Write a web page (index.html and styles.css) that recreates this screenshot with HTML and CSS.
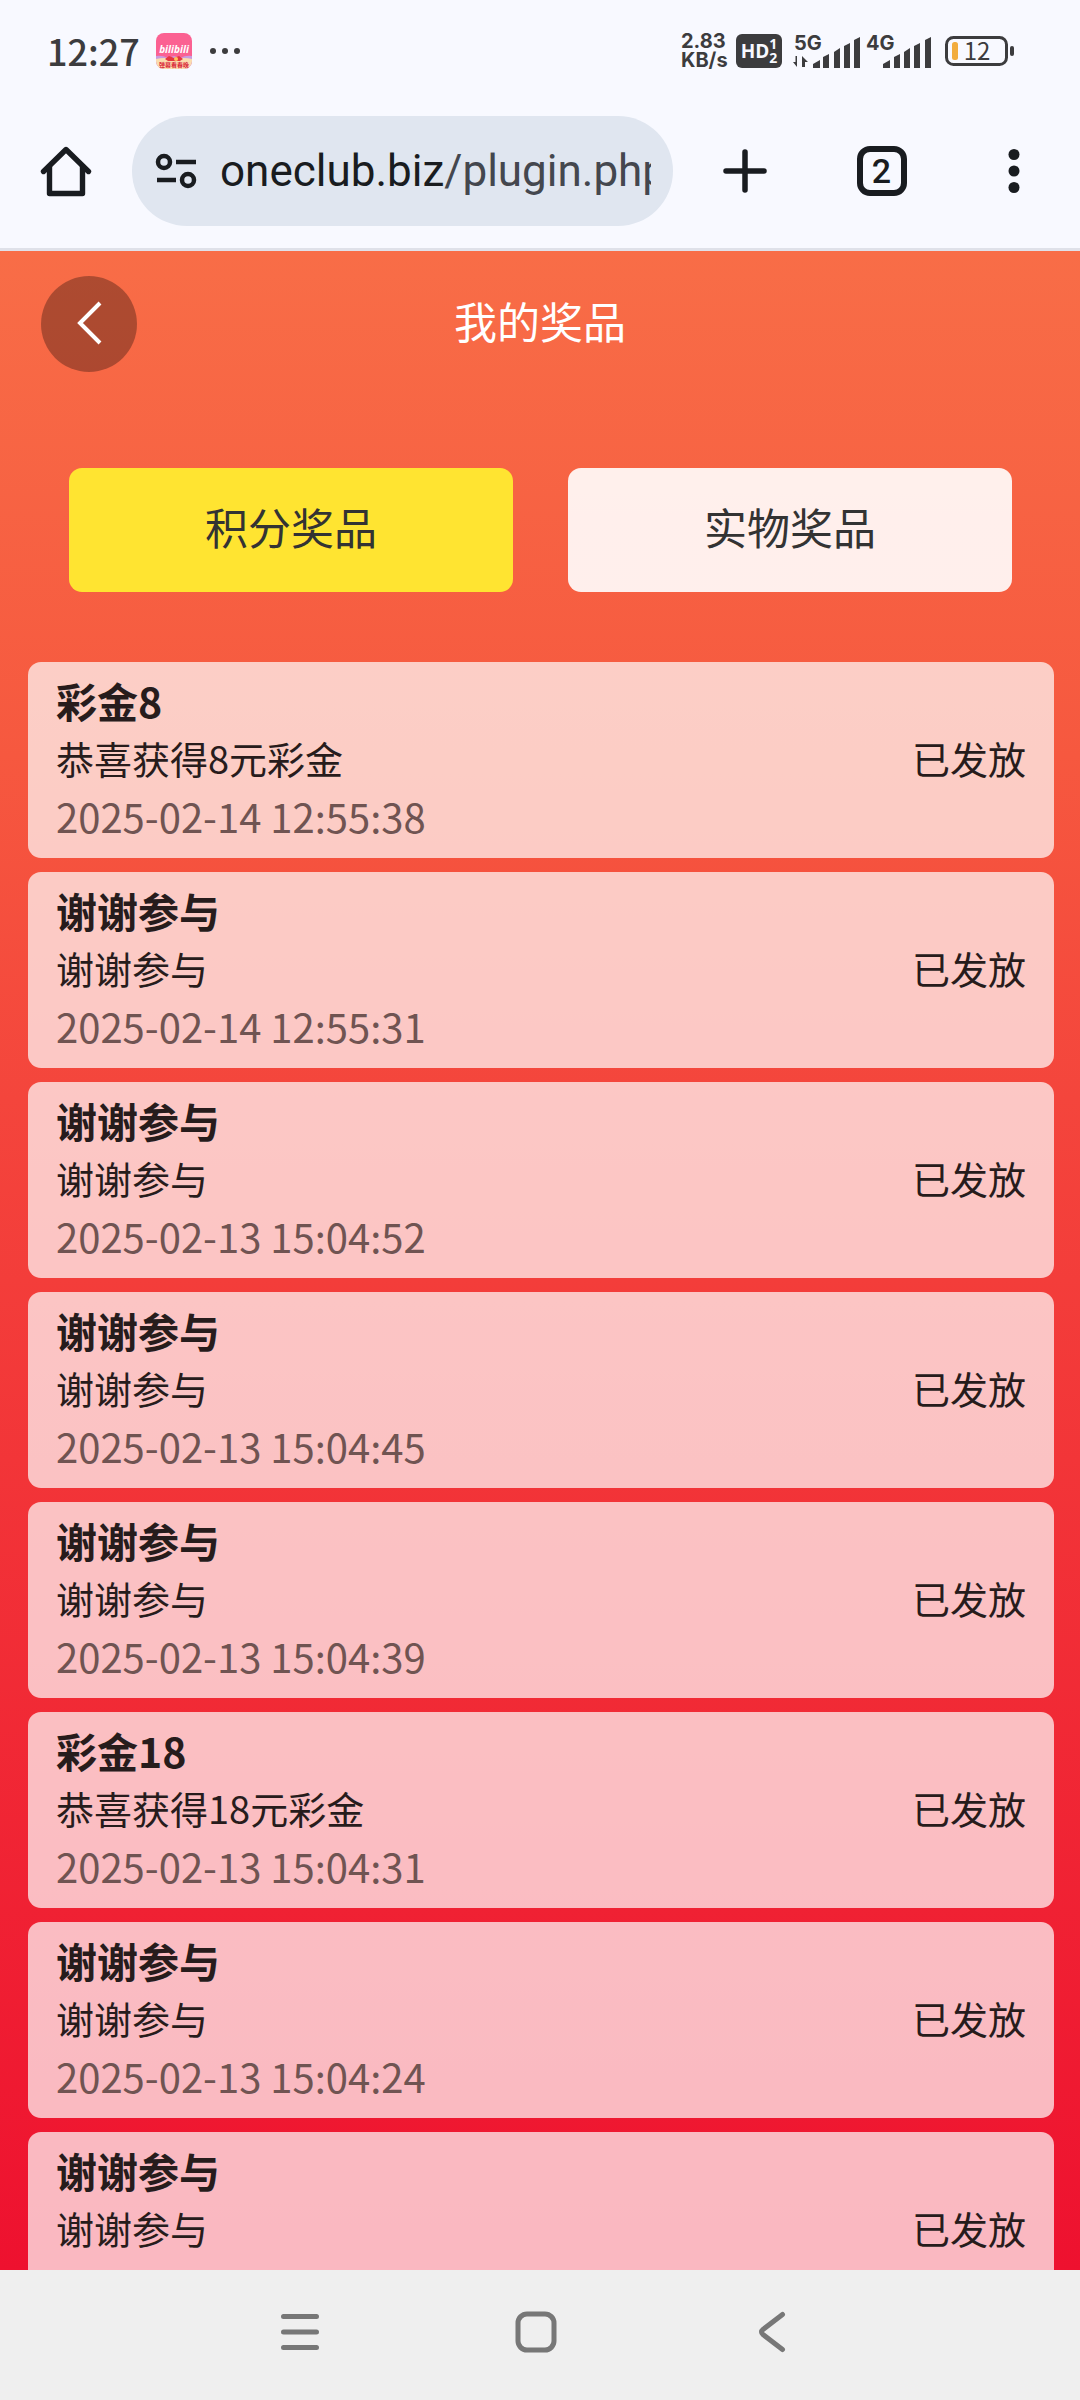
FILE: index.html
```html
<!DOCTYPE html>
<html lang="zh-CN">
<head>
<meta charset="utf-8">
<meta name="viewport" content="width=device-width, initial-scale=1">
<title>我的奖品</title>
<link rel="stylesheet" href="styles.css">
</head>
<body>
<header class="chrome">
  <div class="status">
    <time class="clock">12:27</time>
    <svg class="app-icon" width="36" height="36" viewBox="0 0 36 36" role="img" aria-label="bilibili">
      <defs><clipPath id="app-clip"><rect width="36" height="36" rx="8"/></clipPath></defs>
      <g clip-path="url(#app-clip)">
        <rect width="36" height="36" fill="#fb6192"/>
        <path d="M0 23q6-1 12 2l6-2 6 2q6-3 12-2v13H0z" fill="#c99be0"/>
        <path d="M0 26q8-2 18 0 10-2 18 0v10H0z" fill="#fbdcae"/>
        <path d="M9 26l4-3 5 2 5-2 4 3-3 2H12z" fill="#e5363f"/>
        <circle cx="20" cy="26" r="2" fill="#ffc35c"/>
        <text class="app-name" x="18" y="20" text-anchor="middle">bilibili</text>
        <text class="app-tag" x="18" y="34" text-anchor="middle">弹幕看春晚</text>
      </g>
    </svg>
    <svg class="more-dots" width="32" height="8" viewBox="0 0 32 8" fill="#3c3c3e" aria-hidden="true"><circle cx="4" cy="4" r="3"/><circle cx="16" cy="4" r="3"/><circle cx="28" cy="4" r="3"/></svg>
    <div class="status-right">
      <div class="speed"><span>2.83</span><span>KB/s</span></div>
      <div class="hd"><span>HD</span><span class="hd-sims"><span>1</span><span>2</span></span></div>
      <svg class="signal" width="68" height="34" viewBox="0 0 68 34" fill="#3c3c3e">
        <text class="net" x="1" y="16">5G</text>
        <path d="M4 22v11L0 28h2.5v-6zM9 33V22l6 6h-3v5z"/>
        <path d="M20 34v-4l7-4v8zM30 34V23l6-3v14zM41 34V18l6-4v20zM51 34V12l6-3v25zM61 34V6l6-3v31z"/>
      </svg>
      <svg class="signal signal-2" width="66" height="34" viewBox="0 0 66 34" fill="#3c3c3e">
        <text class="net" x="0" y="16">4G</text>
        <path d="M17 34v-4l7-4v8zM28 34V23l6-3v14zM38 34V18l6-4v20zM48 34V12l6-3v25zM59 34V6l6-3v31z"/>
      </svg>
      <svg class="battery" width="70" height="30" viewBox="0 0 70 30">
        <rect x="1.5" y="1.5" width="60" height="27" rx="7" fill="none" stroke="#3c3c3e" stroke-width="3"/>
        <rect x="7" y="6" width="6" height="18" rx="2.5" fill="#f2ad3e"/>
        <rect x="65" y="10" width="4" height="10" rx="2" fill="#3c3c3e"/>
        <text class="charge" x="32" y="24" text-anchor="middle">12</text>
      </svg>
    </div>
  </div>
  <div class="toolbar">
    <button class="tool" aria-label="主页">
      <svg width="52" height="52" viewBox="0 0 52 52" fill="none" stroke="#191c20" stroke-width="5.4" stroke-linejoin="round" stroke-linecap="round"><path d="M3.500 26.500L26 4.500l22.500 22"/><path d="M9.500 22v26.500h33V22"/></svg>
    </button>
    <button class="omnibox">
      <svg class="site-info" width="42" height="36" viewBox="0 0 42 36" fill="none" stroke="#191c20" stroke-width="4.500"><circle cx="9" cy="9" r="6"/><path d="M21 9h20M2 27h19"/><circle cx="33" cy="27" r="6"/></svg>
      <span class="url">oneclub.biz<span class="url-path">/plugin.php</span></span>
    </button>
    <button class="tool" aria-label="新标签页">
      <svg width="44" height="44" viewBox="0 0 44 44" stroke="#191c20" stroke-width="5.500" stroke-linecap="round"><path d="M22 3v38M3 22h38"/></svg>
    </button>
    <button class="tool" aria-label="标签页"><span class="tab-count">2</span></button>
    <button class="tool" aria-label="菜单">
      <svg width="12" height="44" viewBox="0 0 12 44" fill="#191c20"><circle cx="6" cy="5.500" r="5.500"/><circle cx="6" cy="22" r="5.500"/><circle cx="6" cy="38.500" r="5.500"/></svg>
    </button>
  </div>
</header>

<main class="page">
  <div class="page-head">
    <button class="back" aria-label="返回">
      <svg width="26" height="46" viewBox="0 0 26 46" fill="none" stroke="#fff" stroke-width="4"><path d="M24 2L4 22l20 20"/></svg>
    </button>
    <h1 class="page-title">我的奖品</h1>
  </div>
  <div class="tabs">
    <button class="tab tab-active">积分奖品</button>
    <button class="tab">实物奖品</button>
  </div>
  <ul class="prizes">
    <li class="prize"><div><h2 class="name">彩金8</h2><p class="note">恭喜获得8元彩金</p><time class="when">2025-02-14 12:55:38</time></div><span class="state">已发放</span></li>
    <li class="prize"><div><h2 class="name">谢谢参与</h2><p class="note">谢谢参与</p><time class="when">2025-02-14 12:55:31</time></div><span class="state">已发放</span></li>
    <li class="prize"><div><h2 class="name">谢谢参与</h2><p class="note">谢谢参与</p><time class="when">2025-02-13 15:04:52</time></div><span class="state">已发放</span></li>
    <li class="prize"><div><h2 class="name">谢谢参与</h2><p class="note">谢谢参与</p><time class="when">2025-02-13 15:04:45</time></div><span class="state">已发放</span></li>
    <li class="prize"><div><h2 class="name">谢谢参与</h2><p class="note">谢谢参与</p><time class="when">2025-02-13 15:04:39</time></div><span class="state">已发放</span></li>
    <li class="prize"><div><h2 class="name">彩金18</h2><p class="note">恭喜获得18元彩金</p><time class="when">2025-02-13 15:04:31</time></div><span class="state">已发放</span></li>
    <li class="prize"><div><h2 class="name">谢谢参与</h2><p class="note">谢谢参与</p><time class="when">2025-02-13 15:04:24</time></div><span class="state">已发放</span></li>
    <li class="prize"><div><h2 class="name">谢谢参与</h2><p class="note">谢谢参与</p></div><span class="state">已发放</span></li>
  </ul>
</main>

<nav class="system-nav" aria-label="系统导航">
  <button class="sys" aria-label="最近任务"><svg width="40" height="42" viewBox="0 0 40 42" stroke="#777" stroke-width="5" stroke-linecap="round"><path d="M3.500 5.500h33M3.500 21h33M3.500 36.500h33"/></svg></button>
  <button class="sys" aria-label="主屏幕"><svg width="42" height="42" viewBox="0 0 42 42" fill="none" stroke="#777" stroke-width="5"><rect x="3" y="3" width="36" height="36" rx="9"/></svg></button>
  <button class="sys" aria-label="返回上一页"><svg width="28" height="42" viewBox="0 0 28 42" fill="none" stroke="#777" stroke-width="5" stroke-linecap="round"><path d="M24.500 3.500L5 18.500q-3 2.500 0 5l19.500 15"/></svg></button>
</nav>
</body>
</html>
```
FILE: styles.css
```css
* {
  box-sizing: border-box;
}

body {
  margin: 0;
  height: 100vh;
  display: flex;
  flex-direction: column;
  overflow: hidden;
  font-family: "Noto Sans CJK SC", sans-serif;
}

button {
  margin: 0;
  padding: 0;
  border: 0;
  background: none;
  font: inherit;
  color: inherit;
}

svg {
  display: block;
  flex: none;
  overflow: visible;
}

/* Status bar and browser toolbar */
.chrome {
  flex: none;
  background: #f8f9ff;
  border-bottom: 3px solid #dfe1e9;
}

.status {
  display: flex;
  align-items: center;
  height: 94px;
  padding: 8px 65px 0 47px;
  color: #3c3c3e;
}

.clock {
  padding-bottom: 3px;
  font-size: 36px;
  font-weight: 500;
  line-height: 40px;
}

.app-icon {
  margin-left: 16px;
}

.more-dots {
  margin-left: 17px;
}

.app-name {
  font: italic bold 10px "Open Sans", sans-serif;
  fill: #fff;
}

.app-tag {
  font-size: 6px;
  font-weight: 700;
  fill: #d9263a;
}

.status-right {
  display: flex;
  align-items: center;
  margin-left: auto;
}

.speed {
  display: flex;
  flex-direction: column;
  width: 48px;
  margin-right: 7px;
  font: 700 20px/19px Inter, sans-serif;
}

.hd {
  display: flex;
  align-items: center;
  justify-content: center;
  width: 46px;
  height: 34px;
  margin-right: 11px;
  border-radius: 6px;
  background: #3c3c3e;
  color: #f8f9ff;
  font: 700 19px/24px "Open Sans", sans-serif;
}

.hd-sims {
  display: flex;
  flex-direction: column;
  font-size: 14px;
  line-height: 14px;
}

.signal-2 {
  margin-left: 5px;
}

.net {
  font: 700 20px Inter, sans-serif;
}

.battery {
  margin-left: 13px;
}

.charge {
  font-size: 24px;
  fill: #3c3c3e;
}

.toolbar {
  display: grid;
  grid-template-columns: 132px 1fr 143px 131px 133px;
  align-items: center;
  height: 154px;
}

.tool {
  display: flex;
  align-items: center;
  justify-content: center;
  height: 110px;
}

.omnibox {
  display: flex;
  align-items: center;
  gap: 23px;
  height: 110px;
  min-width: 0;
  padding: 0 22px 0 23px;
  border-radius: 55px;
  background: #e0e6f0;
  color: #191c20;
  font: 44px/60px Roboto, sans-serif;
  text-align: left;
}

.url {
  flex: 1;
  overflow: hidden;
  white-space: nowrap;
}

.url-path {
  color: #44474e;
}

.tab-count {
  display: flex;
  align-items: center;
  justify-content: center;
  width: 50px;
  height: 50px;
  border: 6px solid #191c20;
  border-radius: 13px;
  color: #191c20;
  font: 500 34px/38px Roboto, sans-serif;
}

/* Prize page */
.page {
  flex: 1;
  min-height: 0;
  overflow: hidden;
  padding: 25px 26px 0 28px;
  background: linear-gradient(#f86d47, #f6583f 25%, #f4453c 42%, #ee112f);
}

.page-head {
  display: grid;
  grid-template-columns: 96px 1fr 96px;
  align-items: center;
  padding: 0 15px 0 13px;
}

.back {
  display: flex;
  align-items: center;
  justify-content: center;
  height: 96px;
  border-radius: 50%;
  background: rgba(0, 0, 0, 0.3);
}

.page-title {
  margin: 0;
  padding-bottom: 8px;
  color: #fff;
  font-size: 43px;
  font-weight: 400;
  line-height: 60px;
  text-align: center;
}

.tabs {
  display: grid;
  grid-template-columns: 1fr 1fr;
  gap: 55px;
  padding: 96px 42px 70px 41px;
}

.tab {
  height: 124px;
  padding-bottom: 8px;
  border-radius: 13px;
  background: rgba(255, 255, 255, 0.9);
  color: #333;
  font-size: 43px;
  line-height: 60px;
}

.tab-active {
  background: #ffe431;
}

.prizes {
  display: grid;
  gap: 14px;
  margin: 0;
  padding: 0;
  list-style: none;
}

.prize {
  display: flex;
  align-items: center;
  justify-content: space-between;
  min-height: 196px;
  padding: 9px 28px 13px;
  border-radius: 13px;
  background: rgba(255, 255, 255, 0.7);
  color: #271c1c;
  font-size: 38px;
  line-height: 58px;
}

.prize > div {
  align-self: flex-start;
}

.name {
  margin: 0;
  font-size: 41px;
  font-weight: 700;
}

.note {
  margin: 0;
}

.when {
  display: block;
  color: #705452;
  font-size: 40px;
}

/* Android navigation */
.system-nav {
  flex: none;
  display: flex;
  align-items: center;
  justify-content: center;
  gap: 136px;
  height: 130px;
  padding: 0 8px 6px 0;
  background: #efefef;
}

.sys {
  display: flex;
  align-items: center;
  justify-content: center;
  width: 100px;
  height: 100px;
}
```
